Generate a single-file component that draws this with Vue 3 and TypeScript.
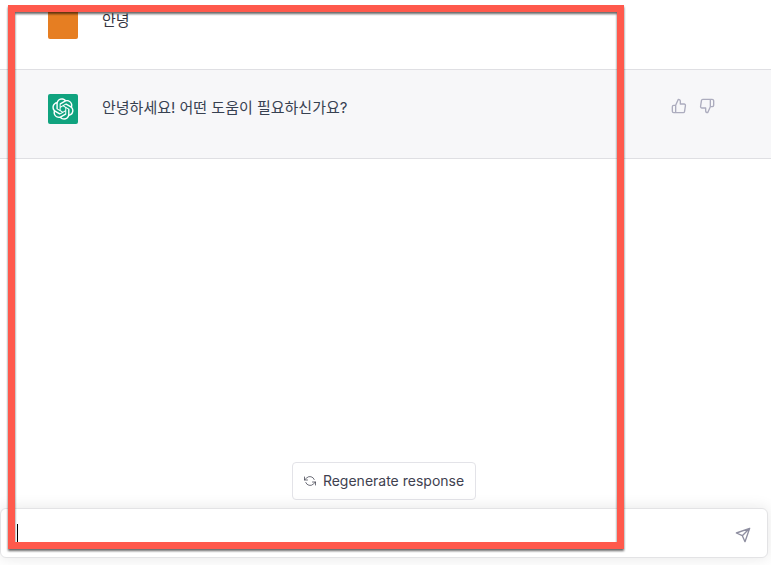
<script setup lang="ts">
import { ref } from 'vue'

interface Message {
  id: number
  author: 'user' | 'assistant'
  text: string
}

const messages: Message[] = [
  { id: 1, author: 'user', text: '안녕' },
  { id: 2, author: 'assistant', text: '안녕하세요! 어떤 도움이 필요하신가요?' },
]

const draft = ref('')
</script>

<template>
  <div class="chat">
    <main class="thread">
      <article v-for="m in messages" :key="m.id" class="message" :class="m.author">
        <div class="avatar">
          <svg v-if="m.author === 'assistant'" viewBox="0 0 41 41" width="22" height="22" fill="currentColor" aria-hidden="true">
            <path d="M37.5324 16.8707C37.9808 15.5241 38.1363 14.0974 37.9886 12.6859C37.8409 11.2744 37.3934 9.91076 36.676 8.68622C35.6126 6.83404 33.9882 5.3676 32.0373 4.4985C30.0864 3.62941 27.9098 3.40259 25.8215 3.85078C24.8796 2.7893 23.7219 1.94125 22.4257 1.36341C21.1295 0.785575 19.7249 0.491269 18.3058 0.500197C16.1708 0.495044 14.0893 1.16803 12.3614 2.42214C10.6335 3.67624 9.34853 5.44666 8.6917 7.47815C7.30085 7.76286 5.98686 8.3414 4.8377 9.17505C3.68854 10.0087 2.73073 11.0782 2.02839 12.312C0.956464 14.1591 0.498905 16.2988 0.721698 18.4228C0.944492 20.5467 1.83612 22.5449 3.268 24.1293C2.81966 25.4759 2.66413 26.9026 2.81182 28.3141C2.95951 29.7256 3.40701 31.0892 4.12437 32.3138C5.18791 34.1659 6.8123 35.6322 8.76321 36.5013C10.7141 37.3704 12.8907 37.5973 14.9789 37.1492C15.9208 38.2107 17.0786 39.0587 18.3747 39.6366C19.6709 40.2144 21.0755 40.5087 22.4946 40.4998C24.6307 40.5054 26.7133 39.8321 28.4418 38.5772C30.1704 37.3223 31.4556 35.5506 32.1119 33.5179C33.5027 33.2332 34.8167 32.6547 35.9659 31.821C37.115 30.9874 38.0728 29.9178 38.7752 28.684C39.8458 26.8371 40.3023 24.6979 40.0789 22.5748C39.8556 20.4517 38.9639 18.4544 37.5324 16.8707ZM22.4978 37.8849C20.7443 37.8874 19.0459 37.2733 17.6994 36.1501C17.7601 36.117 17.8666 36.0586 17.936 36.0161L25.9004 31.4156C26.1003 31.3019 26.2663 31.137 26.3813 30.9378C26.4964 30.7386 26.5563 30.5124 26.5549 30.2825V19.0542L29.9213 20.998C29.9389 21.0068 29.9541 21.0198 29.9656 21.0359C29.977 21.052 29.9842 21.0707 29.9867 21.0902V30.3889C29.9842 32.375 29.1946 34.2791 27.7909 35.6841C26.3872 37.0892 24.4838 37.8806 22.4978 37.8849ZM6.39227 31.0064C5.51397 29.4888 5.19742 27.7107 5.49804 25.9832C5.55718 26.0187 5.66048 26.0818 5.73461 26.1244L13.699 30.7248C13.8975 30.8408 14.1233 30.902 14.3532 30.902C14.583 30.902 14.8088 30.8408 15.0073 30.7248L24.731 25.1103V28.9979C24.7321 29.0177 24.7283 29.0376 24.7199 29.0556C24.7115 29.0736 24.6988 29.0893 24.6829 29.1012L16.6317 33.7497C14.9096 34.7416 12.8643 35.0097 10.9447 34.4954C9.02506 33.9811 7.38785 32.7263 6.39227 31.0064ZM4.29707 13.6194C5.17156 12.0998 6.55279 10.9364 8.19885 10.3327C8.19885 10.4013 8.19491 10.5228 8.19491 10.6071V19.808C8.19351 20.0378 8.25334 20.2638 8.36823 20.4629C8.48312 20.6619 8.64893 20.8267 8.84863 20.9404L18.5723 26.5542L15.206 28.4979C15.1894 28.5089 15.1703 28.5155 15.1505 28.5173C15.1307 28.5191 15.1107 28.516 15.0924 28.5082L7.04046 23.8557C5.32135 22.8601 4.06716 21.2235 3.55289 19.3046C3.03862 17.3858 3.30624 15.3413 4.29707 13.6194ZM31.955 20.0556L22.2312 14.4411L25.5976 12.4981C25.6142 12.4872 25.6333 12.4805 25.6531 12.4787C25.6729 12.4769 25.6928 12.4801 25.7111 12.4879L33.7631 17.1364C34.9967 17.849 36.0017 18.8982 36.6606 20.1613C37.3194 21.4244 37.6047 22.849 37.4832 24.2684C37.3617 25.6878 36.8382 27.0432 35.9743 28.1759C35.1103 29.3086 33.9415 30.1717 32.6047 30.6641C32.6047 30.5947 32.6047 30.4733 32.6047 30.3889V21.188C32.6066 20.9586 32.5474 20.7328 32.4332 20.5338C32.319 20.3348 32.154 20.1698 31.955 20.0556ZM35.3055 15.0128C35.2464 14.9765 35.1431 14.9142 35.069 14.8717L27.1045 10.2712C26.906 10.1554 26.6803 10.0943 26.4504 10.0943C26.2206 10.0943 25.9948 10.1554 25.7963 10.2712L16.0726 15.8858V11.9982C16.0715 11.9783 16.0753 11.9585 16.0837 11.9405C16.0921 11.9225 16.1048 11.9068 16.1207 11.8949L24.1719 7.25025C25.4053 6.53903 26.8158 6.19376 28.2383 6.25482C29.6608 6.31589 31.0364 6.78077 32.2044 7.59508C33.3723 8.40939 34.2842 9.53945 34.8334 10.8531C35.3826 12.1667 35.5464 13.6095 35.3055 15.0128ZM14.2424 21.9419L10.8752 19.9981C10.8576 19.9893 10.8423 19.9763 10.8309 19.9602C10.8195 19.9441 10.8122 19.9254 10.8098 19.9058V10.6071C10.8107 9.18295 11.2173 7.78848 11.9819 6.58696C12.7466 5.38544 13.8377 4.42659 15.1275 3.82264C16.4173 3.21869 17.8524 2.99464 19.2649 3.1767C20.6775 3.35876 22.0089 3.93941 23.1034 4.85067C23.0427 4.88379 22.937 4.94215 22.8668 4.98473L14.9024 9.58517C14.7025 9.69878 14.5366 9.86356 14.4215 10.0626C14.3065 10.2616 14.2466 10.4877 14.2479 10.7175L14.2424 21.9419ZM16.071 17.9991L20.4018 15.4978L24.7325 17.9975V22.9985L20.4018 25.4983L16.071 22.9985V17.9991Z" />
          </svg>
        </div>
        <p class="text">{{ m.text }}</p>
        <div v-if="m.author === 'assistant'" class="feedback">
          <button type="button" class="icon-button" aria-label="Good response">
            <svg class="line-icon" viewBox="0 0 24 24" width="16" height="16" aria-hidden="true">
              <path d="M14 9V5a3 3 0 0 0-3-3l-4 9v11h11.28a2 2 0 0 0 2-1.7l1.38-9a2 2 0 0 0-2-2.3zM7 22H4a2 2 0 0 1-2-2v-7a2 2 0 0 1 2-2h3" />
            </svg>
          </button>
          <button type="button" class="icon-button" aria-label="Bad response">
            <svg class="line-icon" viewBox="0 0 24 24" width="16" height="16" aria-hidden="true">
              <path d="M10 15v4a3 3 0 0 0 3 3l4-9V2H5.72a2 2 0 0 0-2 1.7l-1.38 9a2 2 0 0 0 2 2.3zm7-13h2.67A2.31 2.31 0 0 1 22 4v7a2.31 2.31 0 0 1-2.33 2H17" />
            </svg>
          </button>
        </div>
      </article>
    </main>

    <footer class="dock">
      <button type="button" class="regenerate">
        <svg class="line-icon thin" viewBox="0 0 24 24" width="12" height="12" aria-hidden="true">
          <path d="M1 4v6h6M23 20v-6h-6" />
          <path d="M20.49 9A9 9 0 0 0 5.64 5.64L1 10m22 4l-4.64 4.36A9 9 0 0 1 3.51 15" />
        </svg>
        Regenerate response
      </button>
      <form class="composer" @submit.prevent>
        <span class="caret" aria-hidden="true"></span>
        <textarea v-model="draft" class="entry" rows="1" aria-label="Message"></textarea>
        <button type="submit" class="icon-button send" aria-label="Send message">
          <svg class="line-icon" viewBox="0 0 24 24" width="16" height="16" aria-hidden="true">
            <path d="M22 2L11 13M22 2l-7 20-4-9-9-4z" />
          </svg>
        </button>
      </form>
    </footer>

    <div class="highlight" aria-hidden="true"></div>
  </div>
</template>

<style>
body {
  margin: 0;
  background: #fff;
}
</style>

<style scoped>
.chat {
  position: relative;
  display: flex;
  flex-direction: column;
  box-sizing: border-box;
  min-height: 100vh;
  font-family: Inter, "Noto Sans CJK KR", sans-serif;
  color: #343541;
}

.thread {
  flex: 1;
}

.message {
  display: flex;
  align-items: flex-start;
  gap: 24px;
  padding: 24px 56px 34px 48px;
  border-bottom: 1px solid #dfdfe3;
}

.message.user {
  padding-top: 9px;
  padding-bottom: 30px;
}

.message.assistant {
  background: #f7f7f9;
  color: #374151;
}

.avatar {
  display: flex;
  align-items: center;
  justify-content: center;
  flex: none;
  width: 30px;
  height: 30px;
  border-radius: 2px;
  color: #fff;
}

.user .avatar {
  background: #e67e22;
}

.assistant .avatar {
  background: #10a37f;
}

.text {
  flex: 1;
  margin: 0;
  font-size: 15px;
  line-height: 28px;
}

.user .text {
  line-height: 24px;
}

.feedback {
  display: flex;
  gap: 12px;
  padding-top: 4px;
  color: #acacbe;
}

.icon-button {
  display: flex;
  padding: 0;
  border: 0;
  background: none;
  color: inherit;
  cursor: pointer;
}

.line-icon {
  fill: none;
  stroke: currentColor;
  stroke-width: 2;
  stroke-linecap: round;
  stroke-linejoin: round;
}

.line-icon.thin {
  stroke-width: 1.5;
}

.dock {
  display: flex;
  flex-direction: column;
  align-items: center;
  gap: 8px;
  padding: 0 3px 7px 0;
}

.regenerate {
  display: flex;
  align-items: center;
  gap: 7px;
  box-sizing: border-box;
  height: 38px;
  padding: 0 11px;
  border: 1px solid #e3e3e8;
  border-radius: 4px;
  background: #fff;
  color: #40414f;
  font: 14px/20px Inter, sans-serif;
  cursor: pointer;
}

.composer {
  position: relative;
  display: flex;
  align-items: center;
  align-self: stretch;
  box-sizing: border-box;
  height: 50px;
  padding: 3px 16px 0;
  border: 1px solid #e3e3e5;
  border-radius: 6px;
  background: #fff;
  box-shadow: 0 0 15px rgba(0, 0, 0, 0.1);
}

.entry {
  flex: 1;
  height: 24px;
  padding: 0;
  border: 0;
  outline: 0;
  resize: none;
  background: transparent;
  color: inherit;
  font: 16px/24px Inter, "Noto Sans CJK KR", sans-serif;
}

.caret {
  position: absolute;
  left: 16px;
  top: 15px;
  width: 1px;
  height: 20px;
  background: #000;
}

.send {
  color: #8e8ea0;
}

.highlight {
  position: absolute;
  inset: 5px 147px 16px 8px;
  border: 7px solid #ff594c;
  filter: drop-shadow(0 2px 1px rgba(0, 0, 0, 0.6));
  pointer-events: none;
}
</style>
